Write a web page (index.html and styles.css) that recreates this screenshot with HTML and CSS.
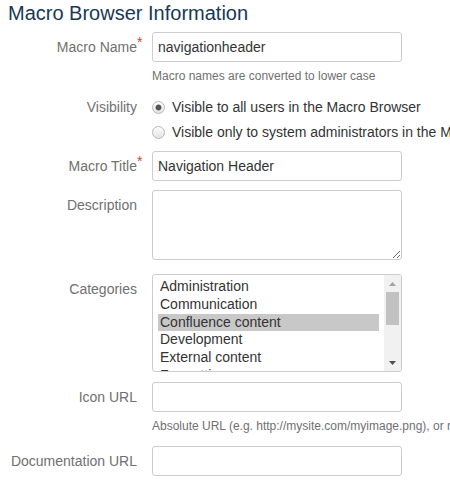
FILE: index.html
```html
<!DOCTYPE html>
<html>
<head>
<meta charset="utf-8">
<link rel="stylesheet" href="styles.css">
</head>
<body>
<div class="page">
  <h2 class="title">Macro Browser Information</h2>
  <div class="form">
    <div class="row">
      <label class="label">Macro Name<span class="req">*</span></label>
      <div class="field">
        <input class="text" type="text" value="navigationheader">
        <div class="help">Macro names are converted to lower case</div>
      </div>
    </div>
    <div class="row row-vis">
      <label class="label">Visibility</label>
      <div class="field radios">
        <label class="radio-line"><input class="radio" type="radio" name="vis" checked>Visible to all users in the Macro Browser</label>
        <label class="radio-line"><input class="radio" type="radio" name="vis">Visible only to system administrators in the Macro Browser</label>
      </div>
    </div>
    <div class="row row-title">
      <label class="label">Macro Title<span class="req">*</span></label>
      <div class="field">
        <input class="text" type="text" value="Navigation Header">
      </div>
    </div>
    <div class="row row-desc">
      <label class="label">Description</label>
      <div class="field">
        <textarea class="area"></textarea>
      </div>
    </div>
    <div class="row row-cat">
      <label class="label">Categories</label>
      <div class="field">
        <div class="listbox">
          <div class="options">
            <div class="opt">Administration</div>
            <div class="opt">Communication</div>
            <div class="opt opt-selected">Confluence content</div>
            <div class="opt">Development</div>
            <div class="opt">External content</div>
            <div class="opt">Formatting</div>
            <div class="opt">Media</div>
          </div>
          <div class="scrollbar">
            <div class="sb-btn sb-up"><svg width="7" height="4" viewBox="0 0 7 4"><path d="M0 4 L3.5 0 L7 4Z"/></svg></div>
            <div class="sb-thumb"></div>
            <div class="sb-spacer"></div>
            <div class="sb-btn sb-down"><svg width="7" height="4" viewBox="0 0 7 4"><path d="M0 0 L3.5 4 L7 0Z"/></svg></div>
          </div>
        </div>
      </div>
    </div>
    <div class="row row-icon">
      <label class="label">Icon URL</label>
      <div class="field">
        <input class="text" type="text" value="">
        <div class="help">Absolute URL (e.g. http://mysite.com/myimage.png), or relative to the Confluence base URL</div>
      </div>
    </div>
    <div class="row row-doc">
      <label class="label">Documentation URL</label>
      <div class="field">
        <input class="text" type="text" value="">
      </div>
    </div>
  </div>
</div>
</body>
</html>
```

FILE: styles.css
```css
html, body {
  margin: 0;
  padding: 0;
  overflow: hidden;
  background: #fff;
}
body {
  font-family: "Liberation Sans", Arial, sans-serif;
  font-size: 14px;
  color: #333;
}
.page {
  padding: 1px 0 0 8px;
}
.title {
  margin: 0 0 7px;
  font-size: 20px;
  line-height: 24px;
  font-weight: normal;
  color: #173857;
}
.row {
  display: grid;
  grid-template-columns: 129px 250px;
  column-gap: 15px;
}
.row-vis { margin-top: 8px; }
.row-title { margin-top: 9px; }
.row-desc { margin-top: 9px; }
.row-cat { margin-top: 14px; }
.row-icon { margin-top: 10px; }
.row-doc { margin-top: 12px; }

.label {
  text-align: right;
  padding-top: 5px;
  line-height: 20px;
  color: #707070;
  white-space: nowrap;
}
.req {
  position: absolute;
  margin-top: -5px;
  color: #d04437;
}
.field {
  min-width: 0;
}
.text {
  display: block;
  box-sizing: border-box;
  width: 250px;
  height: 30px;
  margin: 0;
  padding: 0 5px;
  border: 1px solid #ccc;
  border-radius: 3px;
  font-family: "Liberation Sans", Arial, sans-serif;
  font-size: 14px;
  color: #333;
  outline: none;
  background: #fff;
}
.help {
  margin-top: 6px;
  font-size: 12px;
  line-height: 16px;
  color: #707070;
  white-space: nowrap;
}
.radios {
  padding-top: 5px;
  display: flex;
  flex-direction: column;
  gap: 5px;
}
.radio-line {
  display: flex;
  align-items: center;
  line-height: 20px;
  white-space: nowrap;
  color: #333;
}
.radio {
  appearance: none;
  -webkit-appearance: none;
  box-sizing: border-box;
  width: 13px;
  height: 13px;
  margin: 0 7px 0 0;
  flex: none;
  border: 1px solid #b9b9b9;
  border-radius: 50%;
  background: linear-gradient(#fdfdfd, #e4e4e4);
}
.radio:checked {
  background: radial-gradient(circle, #555 0, #555 2.2px, #8a8a8a 2.8px, transparent 3.4px), linear-gradient(#fdfdfd, #e4e4e4);
}
.area {
  display: block;
  box-sizing: border-box;
  width: 250px;
  height: 70px;
  margin: 0;
  border: 1px solid #ccc;
  border-radius: 3px;
  resize: vertical;
  font-family: "Liberation Sans", Arial, sans-serif;
  font-size: 14px;
  outline: none;
}
.listbox {
  display: flex;
  box-sizing: border-box;
  width: 250px;
  height: 98px;
  border: 1px solid #ccc;
  border-radius: 3px;
  overflow: hidden;
}
.options {
  flex: 1;
  min-width: 0;
  padding: 3px 5px 0;
}
.opt {
  line-height: 17.75px;
  padding-left: 2px;
  white-space: nowrap;
  color: #333;
}
.opt-selected {
  background: #c8c8c8;
}
.scrollbar {
  flex: none;
  width: 17px;
  display: flex;
  flex-direction: column;
  background: #f1f1f1;
}
.sb-btn {
  height: 17px;
  display: flex;
  align-items: center;
  justify-content: center;
  flex: none;
}
.sb-up svg { fill: #a3a3a3; }
.sb-down svg { fill: #505050; }
.sb-thumb {
  height: 33px;
  margin: 0 2px;
  background: #c1c1c1;
  flex: none;
}
.sb-spacer {
  flex: 1;
}
```
